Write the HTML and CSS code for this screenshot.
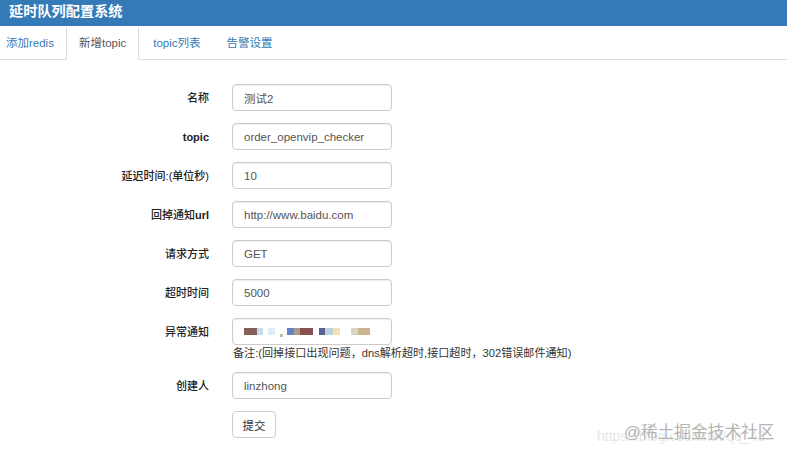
FILE: index.html
```html
<!DOCTYPE html>
<html lang="zh">

<head>
  <meta charset="UTF-8">
  <title>延时队列配置系统</title>
  <link rel="stylesheet" href="styles.css">
</head>

<body>
  <div class="header">延时队列配置系统</div>
  <ul class="tabs">
    <li><a href="#">添加redis</a></li>
    <li class="active"><a href="#">新增topic</a></li>
    <li><a href="#">topic列表</a></li>
    <li><a href="#">告警设置</a></li>
  </ul>
  <form class="form">
    <div class="row">
      <label>名称</label>
      <div class="field"><input type="text" class="muted" value="测试2"></div>
    </div>
    <div class="row">
      <label class="latin">topic</label>
      <div class="field"><input type="text" value="order_openvip_checker"></div>
    </div>
    <div class="row">
      <label>延迟时间:(单位秒)</label>
      <div class="field"><input type="text" value="10"></div>
    </div>
    <div class="row">
      <label>回掉通知<b>url</b></label>
      <div class="field"><input type="text" value="http://www.baidu.com"></div>
    </div>
    <div class="row">
      <label>请求方式</label>
      <div class="field"><input type="text" value="GET"></div>
    </div>
    <div class="row">
      <label>超时时间</label>
      <div class="field"><input type="text" value="5000"></div>
    </div>
    <div class="row row-help">
      <label>异常通知</label>
      <div class="field">
        <div class="fake-input">
          <span class="blur b1"></span><span class="blur b2"></span><span class="blur b3"></span>
          <span class="blur b-dot"></span><span class="blur b4"></span><span class="blur b5"></span>
          <span class="blur b6"></span><span class="blur b7"></span><span class="blur b8"></span>
          <span class="blur b9"></span><span class="blur b10"></span><span class="blur b11"></span>
        </div>
        <div class="help">备注:(回掉接口出现问题，dns解析超时,接口超时，302错误邮件通知)</div>
      </div>
    </div>
    <div class="row">
      <label>创建人</label>
      <div class="field"><input type="text" value="linzhong"></div>
    </div>
    <div class="row">
      <label></label>
      <div class="field"><button type="button">提交</button></div>
    </div>
  </form>
  <div class="watermark">
    <span class="wm-url">https://blog.csdn.net/qq_43</span>
    <span class="wm-name">@稀土掘金技术社区</span>
  </div>
</body>

</html>
```

FILE: styles.css
```css
* {
  margin: 0;
  padding: 0;
  box-sizing: border-box;
  font-family: "Liberation Sans", "Noto Sans CJK SC", sans-serif;
}

html,
body {
  height: 454px;
  overflow: hidden;
}

body {
  position: relative;
  background: #fff;
  color: #333;
  font-size: 11.5px;
}

.header {
  height: 26px;
  line-height: 23px;
  padding-left: 9px;
  background: #337ab7;
  color: #fff;
  font-size: 14.2px;
  font-weight: bold;
}

.tabs {
  display: flex;
  height: 34px;
  list-style: none;
  padding-top: 1px;
  border-bottom: 1px solid #ddd;
}

.tabs li {
  height: 33px;
}

.tabs a {
  display: block;
  height: 33px;
  line-height: 32px;
  padding: 0 13px;
  color: #337ab7;
  text-decoration: none;
}

.tabs li:first-child a {
  padding: 0 12px 0 6px;
}

.tabs .active {
  margin-right: 1px;
}

.tabs .active a {
  color: #555;
  background: #fff;
  border: 1px solid #ddd;
  border-top: none;
  border-bottom-color: #fff;
  padding: 0 12px;
}

.form {
  padding-top: 24px;
}

.row {
  display: flex;
  margin-bottom: 12px;
}

.row-help {
  margin-bottom: 11px;
}

.row label {
  width: 209px;
  flex-shrink: 0;
  height: 27px;
  line-height: 29px;
  text-align: right;
  font-size: 11px;
  font-weight: 500;
  color: #222;
}

.row label.latin,
.row label b {
  font-weight: bold;
}

.field {
  margin-left: 23px;
}

input[type="text"],
.fake-input {
  display: block;
  width: 160px;
  height: 27px;
  padding: 0 11px;
  border: 1px solid #ccc;
  border-radius: 4px;
  background: #fff;
  color: #555;
  font-size: 11.5px;
  box-shadow: inset 0 1px 1px rgba(0, 0, 0, 0.075);
}

.fake-input {
  display: flex;
  align-items: center;
}

.blur {
  display: block;
  height: 7px;
  filter: blur(0.6px);
}

.b1 { width: 13px; background: #85605a; }
.b2 { width: 6px; margin-right: 5px; background: #c5dde8; }
.b3 { width: 7px; margin-right: 5px; background: #e0ecf6; }
.b-dot { width: 3px; height: 3px; margin: 8px 4px 0 0; background: #b9c2a0; }
.b4 { width: 7px; background: #5f83c4; }
.b5 { width: 6px; background: #ae9a8c; }
.b6 { width: 13px; margin-right: 6px; background: #87514f; }
.b7 { width: 6px; background: #59608f; }
.b8 { width: 8px; background: #bcd0dc; }
.b9 { width: 7px; margin-right: 11px; background: #f3e0b4; }
.b10 { width: 7px; background: #d9d5c4; }
.b11 { width: 12px; background: #c9b690; }

.help {
  margin-top: 1px;
  padding-left: 1px;
  line-height: 15px;
  white-space: nowrap;
  font-size: 11.1px;
  color: #333;
}

button {
  display: block;
  width: 44px;
  height: 27px;
  border: 1px solid #ccc;
  border-radius: 4px;
  background: #fff;
  color: #333;
  font-size: 11.5px;
}

.watermark {
  position: absolute;
  top: 419px;
  left: 597px;
  height: 30px;
}

.wm-url {
  position: absolute;
  top: 9px;
  left: 0;
  white-space: nowrap;
  font-size: 14px;
  color: #e6e6e6;
}

.wm-name {
  position: absolute;
  top: 0;
  left: 27px;
  white-space: nowrap;
  font-size: 16.7px;
  color: #b5b5b5;
}
```
